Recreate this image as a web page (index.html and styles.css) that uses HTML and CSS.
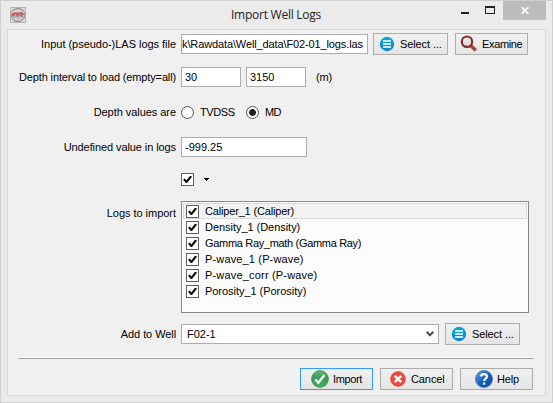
FILE: index.html
```html
<!DOCTYPE html>
<html lang="en">
<head>
<meta charset="utf-8">
<title>Import Well Logs</title>
<link rel="stylesheet" href="styles.css">
</head>
<body>
<svg class="defs" width="0" height="0">
  <defs>
    <linearGradient id="blue" x2="0" y2="1"><stop stop-color="#08a9df"/><stop offset="1" stop-color="#0888c2"/></linearGradient>
    <linearGradient id="green" x2="0" y2="1"><stop stop-color="#5fb777"/><stop offset=".5" stop-color="#2f9a50"/><stop offset="1" stop-color="#51ad62"/></linearGradient>
    <linearGradient id="help" x2="1" y2="1"><stop stop-color="#6da9e6"/><stop offset=".5" stop-color="#1463bd"/><stop offset="1" stop-color="#0b4699"/></linearGradient>
    <symbol id="list" viewBox="0 0 16 16"><circle cx="8" cy="8" r="7.2" fill="url(#blue)"/><path d="M4 4h8v2H4zM4 7h8v2H4zM4 10h8v2H4z" fill="#c9ebf8"/></symbol>
    <symbol id="tick" viewBox="0 0 11 11"><path d="M1.5 5L2.8 4.5 4.3 6.5 8 1.9H9.6V3.3L5 9H3.8L1.5 6.2z" fill="#000"/></symbol>
  </defs>
</svg>
<main class="window">
  <header class="titlebar">
    <svg class="app-icon" viewBox="0 0 16 16"><rect x=".5" y=".5" width="15" height="15" fill="#dadada" stroke="#b5b5b5"/><circle cx="8" cy="8" r="6.8" fill="#b8b8b8" stroke="#959595"/><path d="M2.5 5.5Q8 2 13.5 5.5" stroke="#eee" fill="none"/><path d="M2 8.5L4.5 6l3 .7L11 5.5l3 2M4.5 6.5L3.5 9.5M7.5 7v3M11 6l1 4M6 8h5" stroke="#e34848" stroke-width="1.2" fill="none"/><path d="M3 11Q8 14 13 11" stroke="#ddd" fill="none"/></svg>
    <h1>Import Well Logs</h1>
    <svg class="minimize" viewBox="0 0 8 2"><path d="M0 0h8v2H0z" fill="#222"/></svg>
    <svg class="maximize" viewBox="0 0 10 8"><path d="M0 0h10v8H0zM1 2v5h8V2z" fill="#222" fill-rule="evenodd"/></svg>
    <div class="close"><svg viewBox="0 0 8 7"><path d="M.7.2L7.3 6.8M7.3.2L.7 6.8" stroke="#fff" stroke-width="1.8"/></svg></div>
  </header>
  <section class="client">
    <div class="row file"><label class="l1">Input (pseudo-)LAS logs file</label><div class="field path"><span>k\Rawdata\Well_data\F02-01_logs.las</span></div>
      <button class="select"><svg class="i16"><use href="#list"/></svg><span>Select ...</span></button>
      <button class="examine"><svg class="i18" viewBox="0 0 18 18"><path d="M10.5 10.5l5.5 5" stroke="#b98d88" stroke-width="4"/><path d="M10.5 10.5l5 4.5" stroke="#a63b36" stroke-width="2.4"/><circle cx="7" cy="6.7" r="5.2" fill="#e3e0e2" stroke="#8c2b2b" stroke-width="2.2"/><path d="M4 6q1-3 4-2.5" stroke="#fff" fill="none"/></svg><span>Examine</span></button></div>
    <div class="row depth"><label class="l2">Depth interval to load (empty=all)</label><div class="field short">30</div><div class="field short">3150</div><span class="unit">(m)</span></div>
    <div class="row values"><label class="l3">Depth values are</label><i class="radio"></i><span class="tvdss">TVDSS</span><i class="radio on"></i><span class="md">MD</span></div>
    <div class="row undefined"><label class="l4">Undefined value in logs</label><div class="field medium">-999.25</div></div>
    <div class="row all"><label></label><i class="check"><svg><use href="#tick"/></svg></i><svg class="arrow" viewBox="0 0 5 3"><path d="M0 0h5v1H4v1H3v1H2V2H1V1H0z"/></svg></div>
    <div class="row logs"><label class="l5">Logs to import</label>
      <ul class="list">
        <li class="current"><i class="check"><svg><use href="#tick"/></svg></i><span class="t1">Caliper_1 (Caliper)</span></li>
        <li><i class="check"><svg><use href="#tick"/></svg></i><span class="t2">Density_1 (Density)</span></li>
        <li><i class="check"><svg><use href="#tick"/></svg></i><span class="t3">Gamma Ray_math (Gamma Ray)</span></li>
        <li><i class="check"><svg><use href="#tick"/></svg></i><span class="t4">P-wave_1 (P-wave)</span></li>
        <li><i class="check"><svg><use href="#tick"/></svg></i><span class="t5">P-wave_corr (P-wave)</span></li>
        <li><i class="check"><svg><use href="#tick"/></svg></i><span class="t6">Porosity_1 (Porosity)</span></li>
      </ul></div>
    <div class="row well"><label class="l6">Add to Well</label><div class="field combo"><span>F02-1</span><svg viewBox="0 0 8 6"><path d="M.7.8L4 4.3 7.3.8" fill="none" stroke="#505050" stroke-width="2"/></svg></div>
      <button class="select"><svg class="i16"><use href="#list"/></svg><span>Select ...</span></button></div>
    <hr>
    <footer>
      <button class="default"><svg class="i18" viewBox="0 0 18 18"><circle cx="9" cy="9" r="8.4" fill="url(#green)" stroke="#378b4c" stroke-width=".8"/><path d="M4.2 9.3l3.2 3.3L13.5 5" stroke="#f2faf3" stroke-width="2.4" fill="none"/></svg><span>Import</span></button>
      <button class="cancel"><svg class="i16" viewBox="0 0 16 16"><circle cx="8" cy="8" r="7.3" fill="#ed493c" stroke="#d83c32" stroke-width=".8"/><path d="M4.8 4.8l6.4 6.4M11.2 4.8l-6.4 6.4" stroke="#fff" stroke-width="2.4"/></svg><span>Cancel</span></button>
      <button class="help"><svg class="i18" viewBox="0 0 18 18"><circle cx="9" cy="9" r="8.5" fill="url(#help)" stroke="#3a6dac" stroke-width=".7"/><path d="M6 6.5C6.2 3.2 12 3.3 12 6.4 12 8.6 9.2 8.5 9.2 11M9.2 12.6v2.2" fill="none" stroke="#fff" stroke-width="2.2"/></svg><span>Help</span></button>
    </footer>
  </section>
</main>
</body>
</html>
```
FILE: styles.css
```css
* { box-sizing: border-box; }
body { margin: 0; font: 11px/14px "Liberation Sans", Arial, sans-serif; color: #000; }
.defs { position: absolute; }
svg { display: block; flex: none; }
.window { width: 553px; height: 403px; border: 1px solid #d0d0d0; background: #ebebeb; padding: 0 6px 6px; }
.titlebar { height: 28px; display: flex; align-items: flex-start; }
.app-icon { width: 16px; height: 16px; margin: 6px 0 0 3px; }
h1 { margin: 5px 0 0 205px; width: 91px; font: 12px/18px "Open Sans", sans-serif; letter-spacing: -.25px; white-space: nowrap; color: #222; }
.minimize { width: 8px; height: 2px; margin: 11px 0 0 139px; }
.maximize { width: 10px; height: 8px; margin: 5px 0 0 16px; }
.close { width: 43px; height: 19px; margin-left: 8px; background: #bcbcbc; display: flex; align-items: center; justify-content: center; }
.close svg { width: 8px; height: 7px; }
.client { width: 539px; height: 367px; border: 1px solid #dadada; background: #f0f0f0; padding-top: 3px; }
.row { display: flex; align-items: center; white-space: nowrap; }
label { width: 168px; margin-right: 5px; text-align: right; flex: none; }
.l1 { letter-spacing: -.03px; }
.l2 { letter-spacing: -.14px; }
.l3 { letter-spacing: -.05px; }
.l4 { letter-spacing: -.09px; }
.l5 { letter-spacing: -.03px; }
.l6 { letter-spacing: -.08px; }
.file { height: 22px; }
.depth { height: 20px; margin-top: 12px; }
.values { height: 14px; margin-top: 18px; }
.undefined { height: 20px; margin-top: 18px; }
.all { height: 13px; margin-top: 16px; }
.logs { height: 112px; margin-top: 15px; align-items: flex-start; }
.logs label { padding-top: 5px; }
.well { height: 22px; margin-top: 10px; }
.field { height: 20px; flex: none; border: 1px solid #abadb3; background: #fff; padding: 2px 3px; overflow: hidden; }
.path { width: 187px; padding-left: 0; letter-spacing: -.12px; }
.short { width: 60px; margin-right: 5px; }
.medium { width: 126px; }
.unit { margin-left: 5px; letter-spacing: -.2px; }
.radio { width: 13px; height: 13px; border: 1px solid #555; border-radius: 50%; background: #fff; flex: none; }
.on { background: radial-gradient(circle, #1c1c1c 3px, #fff 3.8px); }
.tvdss { margin-left: 6px; width: 46px; letter-spacing: -.4px; }
.md { margin-left: 6px; letter-spacing: -.6px; }
.check { width: 13px; height: 13px; border: 1px solid #606060; background: #fff; flex: none; }
.check svg { width: 11px; height: 11px; }
.arrow { width: 5px; height: 3px; margin-left: 10px; }
.list { width: 348px; height: 112px; margin: 0; padding: 1px; border: 1px solid #828790; background: #fcfcfc; list-style: none; }
.list li { height: 16px; border: 1px solid transparent; padding-left: 2px; display: flex; align-items: center; }
.list .current { border-color: #dadada; background: #f2f2f2; }
.list li span { margin-left: 6px; }
.t1 { letter-spacing: -.17px; }
.t2 { letter-spacing: -.04px; }
.t3 { letter-spacing: -.32px; }
.t4 { letter-spacing: .15px; }
.t5 { letter-spacing: .18px; }
.t6 { letter-spacing: -.04px; }
.combo { width: 258px; display: flex; align-items: center; justify-content: space-between; padding: 0 4px 0 5px; }
.combo svg { width: 8px; height: 6px; }
button { width: 73px; height: 22px; padding: 0; border: 1px solid #acacac; background: linear-gradient(#f0f0f0, #e5e5e5); display: flex; align-items: center; font: inherit; color: #000; white-space: nowrap; flex: none; }
.select { width: 75px; padding-left: 5px; margin-left: 5px; letter-spacing: -.1px; }
.well .select { margin-left: 6px; }
.select span { margin-left: 5px; }
.examine { margin-left: 7px; padding-left: 4px; letter-spacing: -.35px; }
.examine span { margin-left: 4px; }
.i16 { width: 16px; height: 16px; }
.i18 { width: 18px; height: 18px; }
hr { width: 516px; height: 2px; margin: 12px 0 0 10px; border: 0; border-top: 1px solid #fff; background: #a0a0a0; }
footer { display: flex; gap: 7px; margin: 9px 12px 0 0; justify-content: flex-end; }
.default { border-color: #3399ff; padding-left: 10px; letter-spacing: -.35px; }
.default span { margin-left: 4px; }
.cancel { padding-left: 9px; letter-spacing: -.1px; }
.cancel span { margin-left: 5px; }
.help { padding-left: 14px; letter-spacing: -.2px; }
.help span { margin-left: 4px; }
```
